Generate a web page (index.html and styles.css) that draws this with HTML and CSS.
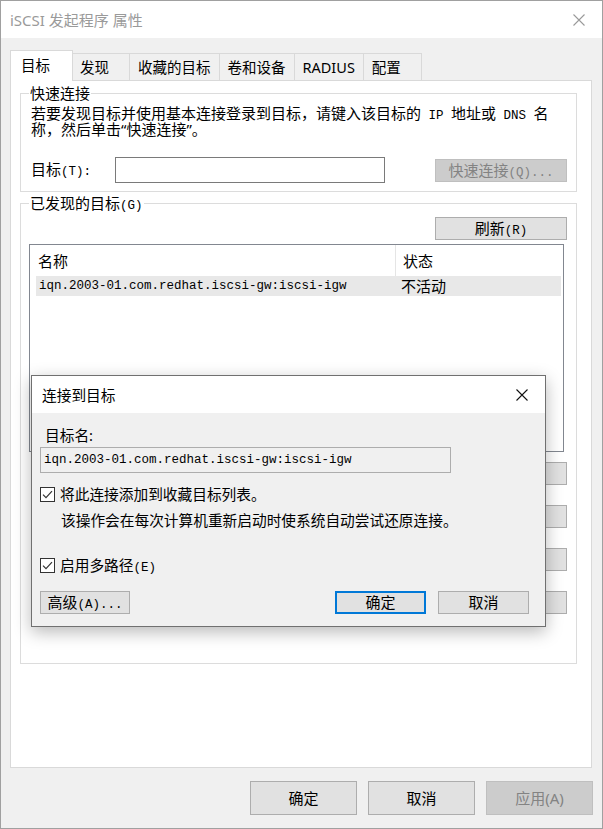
FILE: index.html
```html
<!DOCTYPE html>
<html lang="zh-CN">
<head>
<meta charset="utf-8">
<title>iSCSI 发起程序 属性</title>
<link rel="stylesheet" href="styles.css">
</head>
<body>
<div class="window">
  <div class="titlebar">
    <span class="title">iSCSI 发起程序 属性</span>
    <span class="close">
      <svg width="12" height="12" viewBox="0 0 12 12"><path d="M0.5 0.5 L11.5 11.5 M11.5 0.5 L0.5 11.5" stroke="#9a9a9a" stroke-width="1.1" fill="none"/></svg>
    </span>
  </div>

  <div class="tabs">
    <div class="tab active">目标</div>
    <div class="tab">发现</div>
    <div class="tab">收藏的目标</div>
    <div class="tab">卷和设备</div>
    <div class="tab">RADIUS</div>
    <div class="tab">配置</div>
  </div>

  <div class="panel">
    <fieldset class="group group-quick">
      <legend>快速连接</legend>
      <div class="desc">
        <div class="desc-line">若要发现目标并使用基本连接登录到目标，请键入该目标的<span class="m"> IP </span>地址或<span class="m"> DNS </span>名</div>
        <div class="desc-line">称，然后单击“快速连接”。</div>
      </div>
      <div class="field-row">
        <span class="field-label">目标<span class="m">(T):</span></span>
        <input class="textbox" type="text">
        <button class="btn btn-wide btn-disabled">快速连接<span class="m">(Q)...</span></button>
      </div>
    </fieldset>

    <fieldset class="group group-found">
      <legend>已发现的目标<span class="m">(G)</span></legend>
      <div class="toolbar">
        <button class="btn btn-wide">刷新<span class="m">(R)</span></button>
      </div>
      <div class="listview">
        <div class="lv-header">
          <div class="hcol hcol-name">名称</div>
          <div class="hcol hcol-status">状态</div>
        </div>
        <div class="lv-row">
          <div class="rcol rcol-name m">iqn.2003-01.com.redhat.iscsi-gw:iscsi-igw</div>
          <div class="rcol rcol-status">不活动</div>
        </div>
      </div>
      <div class="action-row first"><button class="btn btn-wide" aria-label="连接(N)"></button></div>
      <div class="action-row"><button class="btn btn-wide" aria-label="断开连接(D)"></button></div>
      <div class="action-row"><button class="btn btn-wide" aria-label="属性(P)..."></button></div>
      <div class="action-row"><button class="btn btn-wide" aria-label="设备(V)..."></button></div>
    </fieldset>
  </div>

  <div class="footer">
    <button class="btn btn-lg">确定</button>
    <button class="btn btn-lg">取消</button>
    <button class="btn btn-lg btn-disabled">应用(A)</button>
  </div>

  <div class="dialog">
    <div class="dialog-titlebar">
      <span class="dialog-title">连接到目标</span>
      <span class="close">
        <svg width="12" height="12" viewBox="0 0 12 12"><path d="M0.5 0.5 L11.5 11.5 M11.5 0.5 L0.5 11.5" stroke="#111" stroke-width="1.1" fill="none"/></svg>
      </span>
    </div>
    <div class="dialog-body">
      <div class="dialog-label">目标名:</div>
      <input class="readonly m" type="text" value="iqn.2003-01.com.redhat.iscsi-gw:iscsi-igw" readonly>
      <div class="check-row">
        <svg class="checkbox" width="15" height="15" viewBox="0 0 15 15"><rect x="0.5" y="0.5" width="14" height="14" fill="#fff" stroke="#333"/><path d="M3 7.6 L6 10.6 L12 4.2" stroke="#333" stroke-width="1.2" fill="none"/></svg>
        <span>将此连接添加到收藏目标列表。</span>
      </div>
      <div class="note">该操作会在每次计算机重新启动时使系统自动尝试还原连接。</div>
      <div class="check-row multi">
        <svg class="checkbox" width="15" height="15" viewBox="0 0 15 15"><rect x="0.5" y="0.5" width="14" height="14" fill="#fff" stroke="#333"/><path d="M3 7.6 L6 10.6 L12 4.2" stroke="#333" stroke-width="1.2" fill="none"/></svg>
        <span>启用多路径<span class="m">(E)</span></span>
      </div>
      <div class="dialog-buttons">
        <button class="btn btn-advanced">高级<span class="m">(A)...</span></button>
        <button class="btn btn-dlg btn-default">确定</button>
        <button class="btn btn-dlg btn-cancel">取消</button>
      </div>
    </div>
  </div>
</div>
</body>
</html>
```

FILE: styles.css
```css
* { box-sizing: border-box; }
html, body { margin: 0; padding: 0; }
body {
  font-family: "Noto Sans", "Noto Sans CJK SC", sans-serif;
  font-size: 15px;
  color: #000;
  background: #f0f0f0;
}
.m {
  font-family: "Liberation Mono", "Noto Sans CJK SC", monospace;
  font-size: 12.5px;
  line-height: 1;
}

.window {
  position: relative;
  width: 603px;
  height: 829px;
  border: 1px solid #a0a0a0;
  background: #f0f0f0;
  overflow: hidden;
}

.titlebar {
  display: flex;
  align-items: center;
  height: 37px;
  background: #fff;
  padding-left: 9px;
}
.title { color: #9a9a9a; font-size: 15px; line-height: 20px; }
.close {
  margin-left: auto;
  width: 46px;
  height: 37px;
  display: flex;
  align-items: center;
  justify-content: center;
}
.close svg { display: block; }

.tabs {
  display: flex;
  align-items: flex-end;
  height: 30px;
  margin-top: 12px;
  padding-left: 11px;
  position: relative;
  z-index: 1;
}
.tab {
  height: 27px;
  min-width: 59px;
  padding: 1px 8px 0;
  border: 1px solid #d9d9d9;
  border-bottom: none;
  background: #f0f0f0;
  line-height: 24px;
  font-size: 14.5px;
  white-space: nowrap;
}
.tab + .tab { margin-left: -1px; }
.tab.active {
  height: 31px;
  min-width: 63px;
  margin: 0 -1px -1px -2px;
  padding: 2px 10px 0;
  background: #fff;
  position: relative;
  z-index: 2;
}

.panel {
  width: 582px;
  height: 688px;
  margin-left: 9px;
  border: 1px solid #d9d9d9;
  background: #fff;
  padding: 4px 0 0 9px;
}

.group {
  width: 557px;
  min-width: 0;
  margin: 0;
  padding: 4px 9px 8px 8px;
  border: 1px solid #dcdcdc;
}
.group legend {
  padding: 0 1px;
  font-size: 15px;
  line-height: 16px;
}
.group-found { margin-top: 3px; padding-bottom: 49px; }

.desc {
  margin: 0 0 0 2px;
  font-size: 15px;
  white-space: nowrap;
}
.desc-line { height: 16px; line-height: 16px; }

.field-row {
  display: flex;
  align-items: center;
  margin-top: 20px;
}
.field-label { width: 84px; margin-left: 2px; line-height: 16px; }
.textbox {
  width: 270px;
  height: 26px;
  margin: 0;
  padding: 0 3px;
  border: 1px solid #7a7a7a;
  background: #fff;
  outline: none;
}
.field-row .btn { margin-left: auto; }

.btn {
  height: 23px;
  margin: 0;
  padding: 0;
  border: 1px solid #adadad;
  background: #e1e1e1;
  font-family: "Noto Sans", "Noto Sans CJK SC", sans-serif;
  font-size: 15px;
  line-height: 19px;
  color: #000;
  white-space: nowrap;
}
.btn-wide { width: 132px; }
.btn-disabled { background: #cccccc; border-color: #bfbfbf; color: #838383; }

.toolbar { display: flex; justify-content: flex-end; }

.listview {
  width: 535px;
  height: 208px;
  margin-top: 4px;
  border: 1px solid #828790;
  background: #fff;
}
.lv-header { display: flex; height: 31px; }
.hcol { padding-top: 4px; line-height: 24px; }
.hcol-name { width: 366px; padding-left: 8px; border-right: 1px solid #e5e5e5; }
.hcol-status { padding-left: 7px; }
.lv-row {
  display: flex;
  height: 20px;
  margin: 0 2px 0 6px;
  background: #e8e8e8;
  line-height: 20px;
}
.rcol { line-height: 20px; }
.rcol-name { width: 357px; padding-left: 3px; }
.rcol-status { padding-left: 8px; }

.action-row { display: flex; justify-content: flex-end; margin-top: 20px; }
.action-row.first { margin-top: 10px; }

.footer {
  display: flex;
  justify-content: flex-end;
  gap: 11px;
  padding: 13px 9px 0 0;
}
.btn-lg { width: 107px; height: 34px; }

.dialog {
  position: absolute;
  left: 30px;
  top: 374px;
  width: 515px;
  border: 1px solid #707070;
  background: #f0f0f0;
  box-shadow: 0 5px 16px rgba(0, 0, 0, 0.28);
  z-index: 5;
}
.dialog-titlebar {
  display: flex;
  align-items: center;
  height: 37px;
  background: #fff;
  padding-left: 10px;
}
.dialog-title { font-size: 14.7px; line-height: 20px; }
.dialog-body { padding: 14px 16px 12px 8px; font-size: 14.7px; }
.dialog-label { margin-left: 5px; line-height: 16px; }
.readonly {
  display: block;
  width: 411px;
  height: 26px;
  margin: 4px 0 0;
  padding: 0 3px;
  border: 1px solid #adadad;
  background: #f0f0f0;
  color: #000;
  line-height: 24px;
  outline: none;
}
.check-row { display: flex; align-items: center; height: 17px; margin-top: 13px; line-height: 17px; }
.check-row .checkbox { display: block; margin-right: 5px; flex: none; }
.check-row.multi { margin-top: 29px; }
.note { margin-top: 9px; padding-left: 21px; line-height: 16px; }
.dialog-buttons { display: flex; margin-top: 17px; }
.btn-advanced { width: 90px; }
.btn-dlg { width: 91px; }
.btn-default { margin-left: auto; border: 2px solid #0078d7; }
.btn-cancel { margin-left: 12px; }
```
